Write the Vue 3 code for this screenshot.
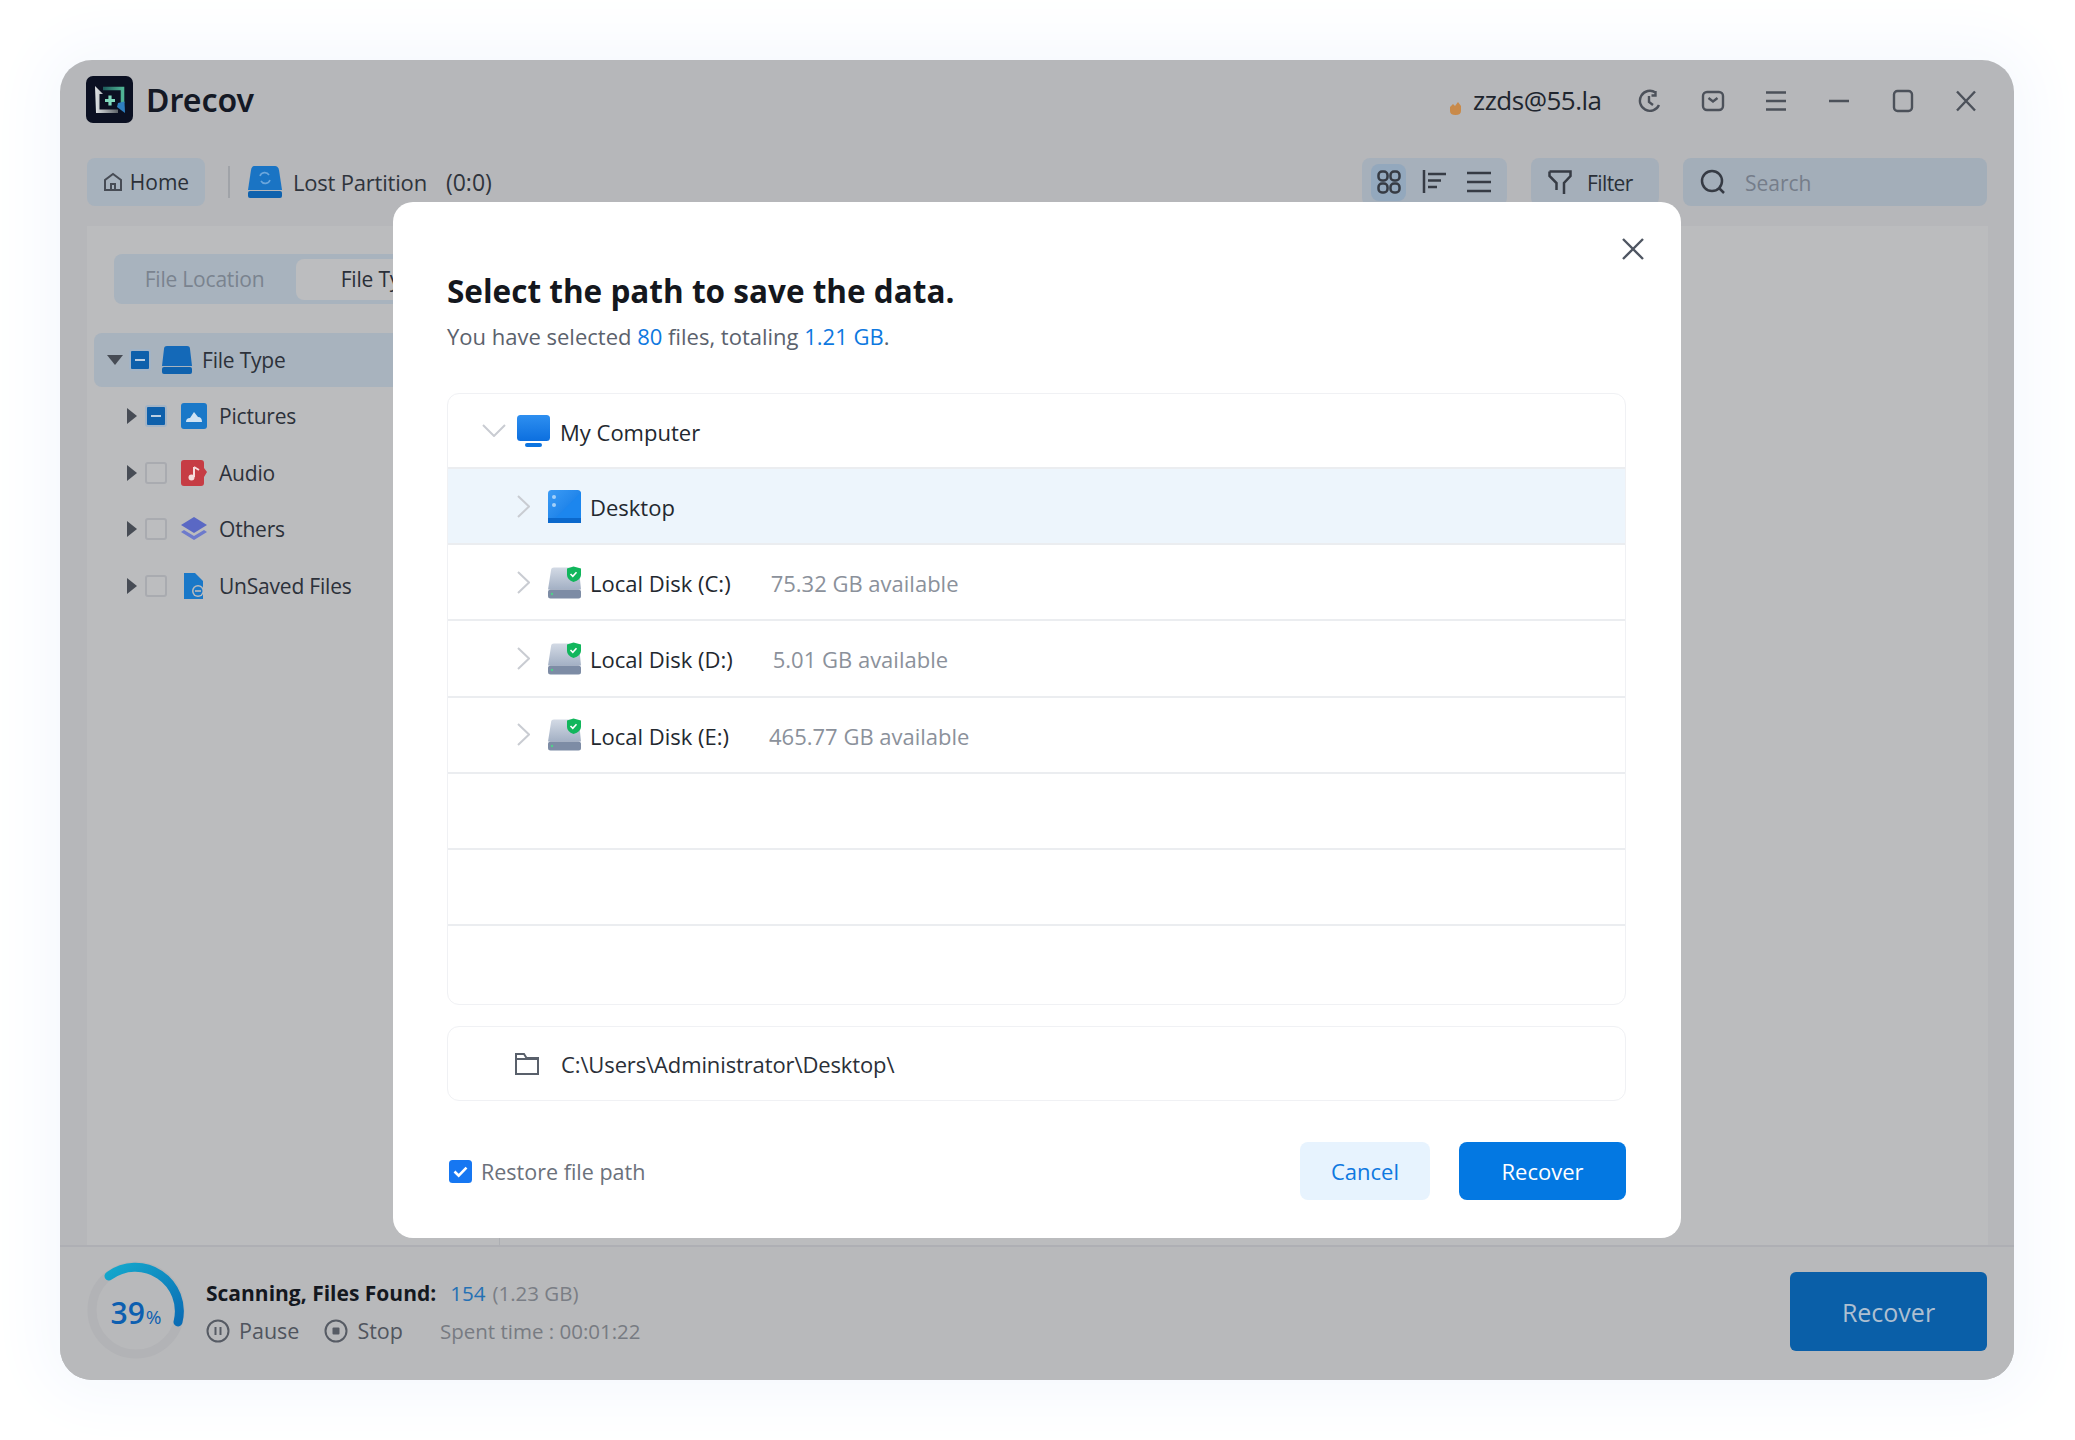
<template>
  <div class="page">
    <div class="window">
      <header class="titlebar">
        <div class="brand">
          <svg class="logo" viewBox="0 0 47 47">
            <defs>
              <linearGradient id="logoA" x1="0" y1="0" x2="1" y2="0">
                <stop offset="0" stop-color="#1d5a5a" />
                <stop offset="1" stop-color="#4fb394" />
              </linearGradient>
              <linearGradient id="logoB" x1="0" y1="0" x2="1" y2="0">
                <stop offset="0" stop-color="#e3e6e8" />
                <stop offset="1" stop-color="#5d6268" />
              </linearGradient>
            </defs>
            <rect width="47" height="47" rx="7" fill="#0b1022" />
            <path d="M17 12.500H36.500V27" fill="none" stroke="url(#logoA)" stroke-width="3.600" />
            <path d="M32 27L38.500 25.500L39 37L31 31Z" fill="#2f7fc0" />
            <path d="M9 10L17 18H13.500V33.500H32V37H10Z" fill="url(#logoB)" />
            <path d="M19 24.500H29M24 19.500V29.500" stroke="#7fd8bd" stroke-width="3.200" />
          </svg>
          <span class="brand-name">Drecov</span>
        </div>
        <div class="win-tools">
          <div class="user">
            <svg class="avatar" viewBox="0 0 15 15">
              <path d="M2 7 L5 4 L7 6 L10 2 L13 6 V11 Q13 15 7.5 15 Q2 15 2 11 Z" fill="#c98a4a" />
            </svg>
            <span>zzds@55.la</span>
          </div>
          <button class="win-btn">
            <svg viewBox="0 0 24 24"><path d="M17.500 3.500A10 10 0 1 0 21 16M17.500 2v4.500h-4M11 7v6l4 3" /></svg>
          </button>
          <button class="win-btn">
            <svg viewBox="0 0 24 24"><rect x="2" y="3" width="20" height="18" rx="4" /><path d="M7.500 9l4.500 3.500L16.500 9" /></svg>
          </button>
          <button class="win-btn">
            <svg viewBox="0 0 24 24"><path d="M2 3.500h20M2 12h20M2 20.500h20" /></svg>
          </button>
          <button class="win-btn">
            <svg viewBox="0 0 24 24"><path d="M2 12h20" /></svg>
          </button>
          <button class="win-btn">
            <svg viewBox="0 0 24 24"><rect x="3" y="2" width="18" height="20" rx="3.5" /></svg>
          </button>
          <button class="win-btn">
            <svg viewBox="0 0 24 24"><path d="M3 2.5l18 19M21 2.5l-18 19" /></svg>
          </button>
        </div>
      </header>

      <div class="toolbar">
        <button class="home-btn">
          <svg viewBox="0 0 20 20"><path d="M2 18V8l8-6 8 6v10zM8 18v-6h4v6" /></svg>
          <span>Home</span>
        </button>
        <i class="sep"></i>
        <svg class="part-icon" viewBox="0 0 34 32">
          <path d="M6 0H27Q30 0 31 4L34 24H0L3 4Q4 0 6 0Z" fill="#1a74c4" />
          <rect y="25" width="34" height="7" rx="2" fill="#0f62ae" />
          <path d="M12 10a5 5 0 0 1 9-1M22 14a5 5 0 0 1-9 1" fill="none" stroke="#6ba6dc" stroke-width="1.6" />
        </svg>
        <span class="crumb">Lost Partition</span>
        <span class="crumb count">(0:0)</span>
        <div class="grow"></div>
        <div class="view-group">
          <span class="view active">
            <svg viewBox="0 0 24 24"><rect x="1.500" y="1.500" width="9" height="9" rx="3.500" /><rect x="13.500" y="1.500" width="9" height="9" rx="3.500" /><rect x="1.500" y="13.500" width="9" height="9" rx="3.500" /><rect x="13.500" y="13.500" width="9" height="9" rx="3.500" /></svg>
          </span>
          <span class="view">
            <svg viewBox="0 0 24 24"><path d="M2 0v23M6 4h18M6 10.500h13M6 17h9" /></svg>
          </span>
          <span class="view">
            <svg viewBox="0 0 24 24"><path d="M0 3h24M0 12h24M0 21h24" /></svg>
          </span>
        </div>
        <button class="filter-btn">
          <svg viewBox="0 0 26 26"><path d="M2.500 2.500H23.500V7L17 14V25M2.500 2.500V7L9.500 14V21" /></svg>
          <span>Filter</span>
        </button>
        <div class="search">
          <svg viewBox="0 0 26 26"><circle cx="12" cy="12" r="10" /><path d="M19 19l5 5" /></svg>
          <span>Search</span>
        </div>
      </div>

      <div class="content">
        <aside class="sidebar">
          <div class="tabs">
            <span class="tab">File Location</span>
            <span class="tab active">File Type</span>
          </div>
          <div class="tree">
            <div class="tree-root">
              <i class="arrow down"></i>
              <span class="check mixed"></span>
              <svg class="root-icon" viewBox="0 0 30 28">
                <path d="M5 0H25Q28 0 28 3L30 20H0L2 3Q2 0 5 0Z" fill="#1469b8" />
                <rect y="21" width="30" height="7" rx="2" fill="#0f62ae" />
              </svg>
              <span>File Type</span>
            </div>
            <div v-for="item in treeItems" :key="item.name" class="tree-item">
              <i class="arrow"></i>
              <span :class="['check', { mixed: item.mixed }]"></span>
              <svg class="item-icon" viewBox="0 0 26 26" v-html="item.icon"></svg>
              <span>{{ item.name }}</span>
            </div>
          </div>
        </aside>
        <main class="results"></main>
      </div>

      <footer class="statusbar">
        <svg class="ring" viewBox="0 0 98 98">
          <defs>
            <linearGradient id="ringA" x1="0" y1="0" x2="1" y2="1">
              <stop offset="0" stop-color="#14a8cc" />
              <stop offset="1" stop-color="#0a6db5" />
            </linearGradient>
          </defs>
          <circle cx="49" cy="49" r="44" fill="none" stroke="#b2b3b6" stroke-width="9" />
          <path d="M22 15 A44 44 0 0 1 91 61" fill="none" stroke="url(#ringA)" stroke-width="9" stroke-linecap="round" />
        </svg>
        <span class="ring-label">39<small>%</small></span>
        <div class="scan">
          <div class="scan-line">
            <b>Scanning, Files Found:</b>
            <span class="found">154</span>
            <span class="size">(1.23 GB)</span>
          </div>
          <div class="scan-line actions">
            <span class="action">
              <svg viewBox="0 0 24 24"><circle cx="12" cy="12" r="10.5" /><path d="M9.5 8v8M14.5 8v8" /></svg>
              Pause
            </span>
            <span class="action">
              <svg viewBox="0 0 24 24"><circle cx="12" cy="12" r="10.5" /><rect x="8.5" y="8.5" width="7" height="7" rx="1" class="solid" /></svg>
              Stop
            </span>
            <span class="spent">Spent time : 00:01:22</span>
          </div>
        </div>
        <button class="recover-main">Recover</button>
      </footer>

      <section class="dialog">
        <button class="dialog-close">
          <svg viewBox="0 0 24 24"><path d="M2 2l20 20M22 2L2 22" /></svg>
        </button>
        <h1>Select the path to save the data.</h1>
        <p class="summary">
          You have selected <em>80</em> files, totaling <em>1.21 GB</em>.
        </p>
        <div class="drive-list">
          <div class="drive-row first">
            <svg class="chev-down" viewBox="0 0 24 13"><path d="M1 1l11 11L23 1" /></svg>
            <svg class="pc-icon" viewBox="0 0 33 32">
              <defs>
                <linearGradient id="pcA" x1="0" y1="0" x2="0" y2="1">
                  <stop offset="0" stop-color="#2e8ff0" />
                  <stop offset="1" stop-color="#0c6fdf" />
                </linearGradient>
              </defs>
              <rect width="33" height="26" rx="3.5" fill="url(#pcA)" />
              <rect x="8" y="28" width="17" height="4" rx="2" fill="#0c74e0" />
            </svg>
            <span class="drive-name">My Computer</span>
          </div>
          <div class="drive-row selected">
            <svg class="chev" viewBox="0 0 13 23"><path d="M1 1l11 10.5L1 22" /></svg>
            <svg class="drive-icon" viewBox="0 0 33 33">
              <defs>
                <linearGradient id="dtA" x1="0" y1="0" x2="1" y2="1">
                  <stop offset="0" stop-color="#3d9cf5" />
                  <stop offset="1" stop-color="#0a73e2" />
                </linearGradient>
              </defs>
              <rect width="33" height="33" rx="3.5" fill="url(#dtA)" />
              <path d="M33 2L3 33H30Q33 33 33 30Z" fill="#1c86ee" />
              <rect y="28" width="33" height="5" fill="#0b68cc" />
              <circle cx="6" cy="7" r="2" fill="#a5d0f8" />
              <circle cx="6" cy="15" r="2" fill="#a5d0f8" />
            </svg>
            <span class="drive-name">Desktop</span>
          </div>
          <div v-for="disk in disks" :key="disk.name" class="drive-row">
            <svg class="chev" viewBox="0 0 13 23"><path d="M1 1l11 10.5L1 22" /></svg>
            <svg class="drive-icon disk" viewBox="0 0 33 32">
              <defs>
                <linearGradient id="dkA" x1="0" y1="0" x2="0" y2="1">
                  <stop offset="0" stop-color="#d3dae5" />
                  <stop offset="1" stop-color="#a3b0c4" />
                </linearGradient>
              </defs>
              <path d="M6 1H22L31 3L33 23H0L3 4Q3 1 6 1Z" fill="url(#dkA)" />
              <rect y="23" width="33" height="9" rx="2.5" fill="#7d8ca5" />
              <circle cx="4" cy="27.5" r="1.2" fill="#4fd08a" />
              <path d="M25.5 0L33 2V8.5Q33 13 25.5 15.5Q19 13 19 8.5V2Z" fill="#11b65c" />
              <path d="M22.5 7.5l2.3 2.3 3.7-4" fill="none" stroke="#fff" stroke-width="1.6" />
            </svg>
            <span class="drive-name">{{ disk.name }}</span>
            <span class="avail">{{ disk.free }} GB available</span>
          </div>
          <div class="drive-row"></div>
          <div class="drive-row"></div>
          <div class="drive-row last"></div>
        </div>
        <div class="path-box">
          <svg class="folder" viewBox="0 0 24 22"><path d="M1 21V1h8l2.500 4H23v16zM1 6h22" /></svg>
          <span>C:\Users\Administrator\Desktop\</span>
        </div>
        <div class="dialog-foot">
          <label class="restore">
            <svg class="tick" viewBox="0 0 23 23">
              <rect width="23" height="23" rx="3.500" fill="#1677f2" />
              <path d="M5.500 11.500l4.200 4.200 7.800-8" fill="none" stroke="#fff" stroke-width="2.600" />
            </svg>
            <span>Restore file path</span>
          </label>
          <div class="grow"></div>
          <button class="btn cancel">Cancel</button>
          <button class="btn primary">Recover</button>
        </div>
      </section>
    </div>
  </div>
</template>

<script setup>
const treeItems = [
  {
    name: "Pictures",
    mixed: true,
    icon: '<rect width="26" height="26" rx="3" fill="#1a78c8"/><path d="M5 19q0-4 4-4l4-6 4 5q4 0 4 5z" fill="#cfe2f3"/>',
  },
  {
    name: "Audio",
    icon: '<path d="M3 0H20Q23 0 23 3V8L26 12L23 17V23Q23 26 20 26H3Q0 26 0 23V3Q0 0 3 0Z" fill="#c63c44"/><path d="M13 7V17M13 7l5 3" stroke="#f5dcdc" stroke-width="2" fill="none"/><circle cx="10.500" cy="17.500" r="3" fill="#f5dcdc"/>',
  },
  {
    name: "Others",
    icon: '<path d="M13 1L26 9L13 17L0 9Z" fill="#5a68c4"/><path d="M3 14L13 20L23 14L26 16L13 24L0 16Z" fill="#6d7acc"/>',
  },
  {
    name: "UnSaved Files",
    icon: '<path d="M3 0H14L22 8V26H3Z" fill="#1a78c8"/><circle cx="17" cy="18" r="6" fill="#bbbcbe"/><circle cx="17" cy="18" r="4.500" fill="#1a78c8"/><path d="M14 18h6" stroke="#bbbcbe" stroke-width="1.600"/>',
  },
];

const disks = [
  { name: "Local Disk (C:)", free: "75.32" },
  { name: "Local Disk (D:)", free: "5.01" },
  { name: "Local Disk (E:)", free: "465.77" },
];
</script>

<style>
html,
body {
  margin: 0;
  background: #fff;
}
</style>

<style scoped>
.page {
  width: 2075px;
  height: 1440px;
  box-sizing: border-box;
  padding: 60px 61px 60px 60px;
  font-family: "Open Sans", "Noto Sans", sans-serif;
  color: #2a2f38;
  background: #fff;
}

button {
  border: 0;
  padding: 0;
  font: inherit;
  background: none;
  color: inherit;
}

svg {
  flex: none;
  fill: none;
  stroke: #474c55;
  stroke-width: 2;
}

.grow {
  flex: 1;
}

.window {
  position: relative;
  display: flex;
  flex-direction: column;
  height: 1320px;
  border-radius: 32px;
  background: #b6b7ba;
  box-shadow: 0 0 60px 20px #f6f9fe;
  overflow: hidden;
}

.titlebar {
  display: flex;
  align-items: center;
  justify-content: space-between;
  height: 98px;
  padding: 0 36px 0 26px;
  box-sizing: border-box;
}

.brand {
  display: flex;
  align-items: center;
  gap: 13px;
  margin-top: -19px;
}

.logo {
  width: 47px;
  height: 47px;
  stroke: none;
}

.brand-name {
  font-family: "Noto Sans", sans-serif;
  font-size: 32px;
  font-weight: 600;
  color: #141925;
}

.win-tools {
  display: flex;
  align-items: center;
  margin-top: -16px;
}

.user {
  display: flex;
  align-items: center;
  gap: 10px;
  margin: -2px 36px 0 0;
  font-size: 26px;
  letter-spacing: -0.5px;
  color: #20252e;
}

.avatar {
  width: 15px;
  height: 15px;
  stroke: none;
  margin-top: 14px;
}

.win-btn {
  display: flex;
  justify-content: center;
  width: 24px;
  margin-right: 39.3px;
}

.win-btn:last-child {
  margin-right: 0;
}

.win-btn svg {
  width: 24px;
  height: 24px;
  stroke: #4c515a;
  stroke-width: 2.4;
}

.toolbar {
  display: flex;
  align-items: center;
  height: 48px;
  padding: 0 27px 0 27px;
}

.home-btn {
  display: flex;
  align-items: center;
  justify-content: center;
  gap: 7px;
  width: 118px;
  height: 48px;
  border-radius: 8px;
  background: #a7b2bd;
  font-size: 21px;
  color: #2b3038;
}

.home-btn svg {
  width: 20px;
  height: 20px;
}

.sep {
  width: 2px;
  height: 32px;
  margin: 0 18px 0 23px;
  background: #a0a3a8;
}

.part-icon {
  width: 34px;
  height: 32px;
  stroke: none;
  margin-right: 11px;
}

.crumb {
  font-size: 22px;
  letter-spacing: -0.2px;
  color: #2f343c;
}

.count {
  margin-left: 19px;
  font-size: 23px;
  letter-spacing: 0;
}

.view-group {
  display: flex;
  align-items: center;
  width: 145px;
  height: 48px;
  padding-left: 9px;
  box-sizing: border-box;
  border-radius: 8px;
  background: #a6b0bb;
}

.view {
  display: flex;
  align-items: center;
  justify-content: center;
  width: 36px;
  height: 37px;
  margin-right: 10px;
  border-radius: 8px;
}

.view.active {
  background: #93a8bd;
}

.view svg {
  width: 24px;
  height: 24px;
  stroke-width: 2.5;
  stroke: #363b44;
}

.filter-btn {
  display: flex;
  align-items: center;
  gap: 14px;
  width: 128px;
  height: 48px;
  margin-left: 24px;
  padding-left: 16px;
  box-sizing: border-box;
  border-radius: 8px;
  background: #a5afba;
  font-size: 21px;
  letter-spacing: -0.6px;
}

.filter-btn svg,
.search svg {
  width: 26px;
  height: 26px;
  stroke: #363b44;
  stroke-width: 2.500;
}

.filter-btn span,
.search span {
  padding-top: 2px;
}

.search {
  display: flex;
  align-items: center;
  gap: 19px;
  width: 304px;
  height: 48px;
  margin-left: 24px;
  padding-left: 17px;
  box-sizing: border-box;
  border-radius: 8px;
  background: #a3aeb9;
  font-size: 21px;
  color: #757d8a;
}

.content {
  flex: 1;
  display: flex;
  margin: 20px 26px 0 27px;
  background: #bbbcbe;
}

.sidebar {
  width: 413px;
  box-sizing: border-box;
  border-right: 1px solid #adafb3;
}

.tabs {
  display: flex;
  align-items: center;
  width: 366px;
  height: 50px;
  margin: 28px 0 0 27px;
  padding-left: 4px;
  border-radius: 8px;
  background: #a8b3be;
  font-size: 21px;
  letter-spacing: -0.2px;
}

.tab {
  width: 178px;
  padding-right: 5px;
  box-sizing: border-box;
  color: #7a838f;
  text-align: center;
}

.tab.active {
  height: 41px;
  line-height: 41px;
  border-radius: 8px;
  background: #bcbdbf;
  color: #2a2f38;
}

.tree {
  margin: 29px 0 0 7px;
  font-size: 21px;
  letter-spacing: -0.2px;
  color: #2c313a;
}

.tree-root {
  display: flex;
  align-items: center;
  height: 54px;
  margin-bottom: 1px;
  padding-left: 13px;
  border-radius: 8px 0 0 8px;
  background: #a8b3be;
}

.tree-item {
  display: flex;
  align-items: center;
  height: 56.500px;
  padding-left: 33px;
}

.tree-root .check {
  margin: 0 11px 0 6px;
}

.root-icon {
  width: 30px;
  height: 28px;
  stroke: none;
  margin-right: 10px;
}

.item-icon {
  width: 26px;
  height: 26px;
  stroke: none;
  margin-right: 12px;
}

.arrow {
  width: 0;
  height: 0;
  border-style: solid;
  border-width: 8px 0 8px 10px;
  border-color: transparent transparent transparent #474c55;
}

.arrow.down {
  border-width: 10px 8px 0;
  border-color: #474c55 transparent transparent;
}

.check {
  width: 18px;
  height: 18px;
  margin: 0 14px 0 8px;
  border: 2px solid #a9abb0;
  border-radius: 3px;
  background: #bcbdbf;
}

.check.mixed {
  position: relative;
  border-color: #a3b4c6;
  background: #0e60ab;
}

.check.mixed::after {
  content: "";
  position: absolute;
  left: 4px;
  top: 8px;
  width: 10px;
  height: 2px;
  background: #bccfe2;
}

.results {
  flex: 1;
}

.statusbar {
  position: relative;
  display: flex;
  align-items: center;
  height: 135px;
  padding: 0 27px 4px 27px;
  box-sizing: border-box;
  border-top: 2px solid #aeafb4;
  background: #b8b9bb;
}

.ring {
  width: 98px;
  height: 98px;
  margin-top: -4px;
  stroke: none;
}

.ring-label {
  position: absolute;
  left: 27px;
  top: 45px;
  width: 98px;
  text-align: center;
  font-size: 30px;
  font-weight: 600;
  line-height: 42px;
  color: #0d5fb0;
}

.ring-label small {
  font-size: 19px;
  font-weight: 400;
  margin-left: 1px;
}

.scan {
  margin-left: 21px;
  flex: 1;
  font-size: 20.500px;
}

.scan-line {
  display: flex;
  align-items: center;
  height: 38px;
  gap: 14px;
}

.scan-line b {
  font-size: 21px;
  font-weight: 700;
  color: #14181f;
}

.found {
  color: #2370b4;
}

.size {
  margin-left: -7px;
  color: #7a7e85;
}

.actions {
  gap: 0;
  color: #50555e;
}

.action {
  display: flex;
  align-items: center;
  gap: 9px;
  margin-right: 25px;
  font-size: 21.500px;
}

.action svg {
  width: 24px;
  height: 24px;
  stroke: #565b64;
}

.action .solid {
  fill: #565b64;
  stroke: none;
}

.spent {
  margin-left: 12px;
  color: #777b82;
}

.recover-main {
  width: 197px;
  height: 79px;
  border-radius: 6px;
  background: #0a5fa8;
  color: #aebfd1;
  font-size: 25px;
}

.dialog {
  position: absolute;
  left: 333px;
  top: 142px;
  width: 1288px;
  height: 1036px;
  padding: 67px 55px 0 54px;
  box-sizing: border-box;
  border-radius: 20px;
  background: #fff;
  color: #2a2f38;
}

.dialog-close {
  position: absolute;
  right: 36px;
  top: 35px;
  width: 24px;
  height: 24px;
}

.dialog-close svg {
  display: block;
  stroke: #4f5662;
  stroke-width: 2.400;
}

.dialog h1 {
  margin: 0;
  font-size: 31.500px;
  line-height: 44px;
  font-weight: 700;
  color: #14171d;
}

.summary {
  margin: 7px 0 41px;
  font-size: 22px;
  line-height: 32px;
  color: #5b626d;
}

.summary em {
  font-style: normal;
  color: #0d78e0;
}

.drive-list {
  height: 612px;
  box-sizing: border-box;
  border: 1px solid #f0f1f4;
  border-radius: 12px;
  overflow: hidden;
}

.drive-row {
  display: flex;
  align-items: center;
  height: 76.200px;
  padding-left: 69px;
  box-sizing: border-box;
  border-bottom: 2px solid #ebedf0;
  font-size: 22px;
}

.drive-row.first {
  height: 75px;
  padding-left: 34px;
}

.drive-row.last {
  border-bottom: 0;
}

.drive-row.selected {
  background: #edf5fc;
}

.chev {
  width: 13px;
  height: 23px;
  margin-right: 18px;
  stroke: #c9ccd2;
}

.chev-down {
  width: 24px;
  height: 13px;
  margin-right: 11px;
  stroke: #c9ccd2;
}

.pc-icon {
  width: 33px;
  height: 32px;
  stroke: none;
  margin-right: 10px;
}

.drive-icon {
  width: 33px;
  height: 33px;
  stroke: none;
  margin-right: 9px;
}

.drive-name {
  padding-top: 2px;
  color: #23282f;
}

.avail {
  margin-left: 40px;
  padding-top: 2px;
  color: #8b919b;
}

.path-box {
  display: flex;
  align-items: center;
  gap: 22px;
  height: 75px;
  margin-top: 21px;
  padding-left: 67px;
  box-sizing: border-box;
  border: 1px solid #f0f1f4;
  border-radius: 12px;
  font-size: 22px;
  letter-spacing: -0.12px;
}

.folder {
  width: 24px;
  height: 22px;
  stroke: #59606b;
}

.dialog-foot {
  display: flex;
  align-items: center;
  margin-top: 41px;
}

.restore {
  display: flex;
  align-items: center;
  gap: 9px;
  margin-left: 2px;
  font-size: 21.500px;
  color: #6b717b;
}

.tick {
  width: 23px;
  height: 23px;
  stroke: none;
}

.btn {
  height: 58px;
  border-radius: 8px;
  font-size: 22px;
}

.cancel {
  width: 130px;
  background: #e7f3fe;
  color: #0d78e0;
}

.primary {
  width: 167px;
  margin-left: 29px;
  background: #0378e2;
  color: #fff;
}
</style>
